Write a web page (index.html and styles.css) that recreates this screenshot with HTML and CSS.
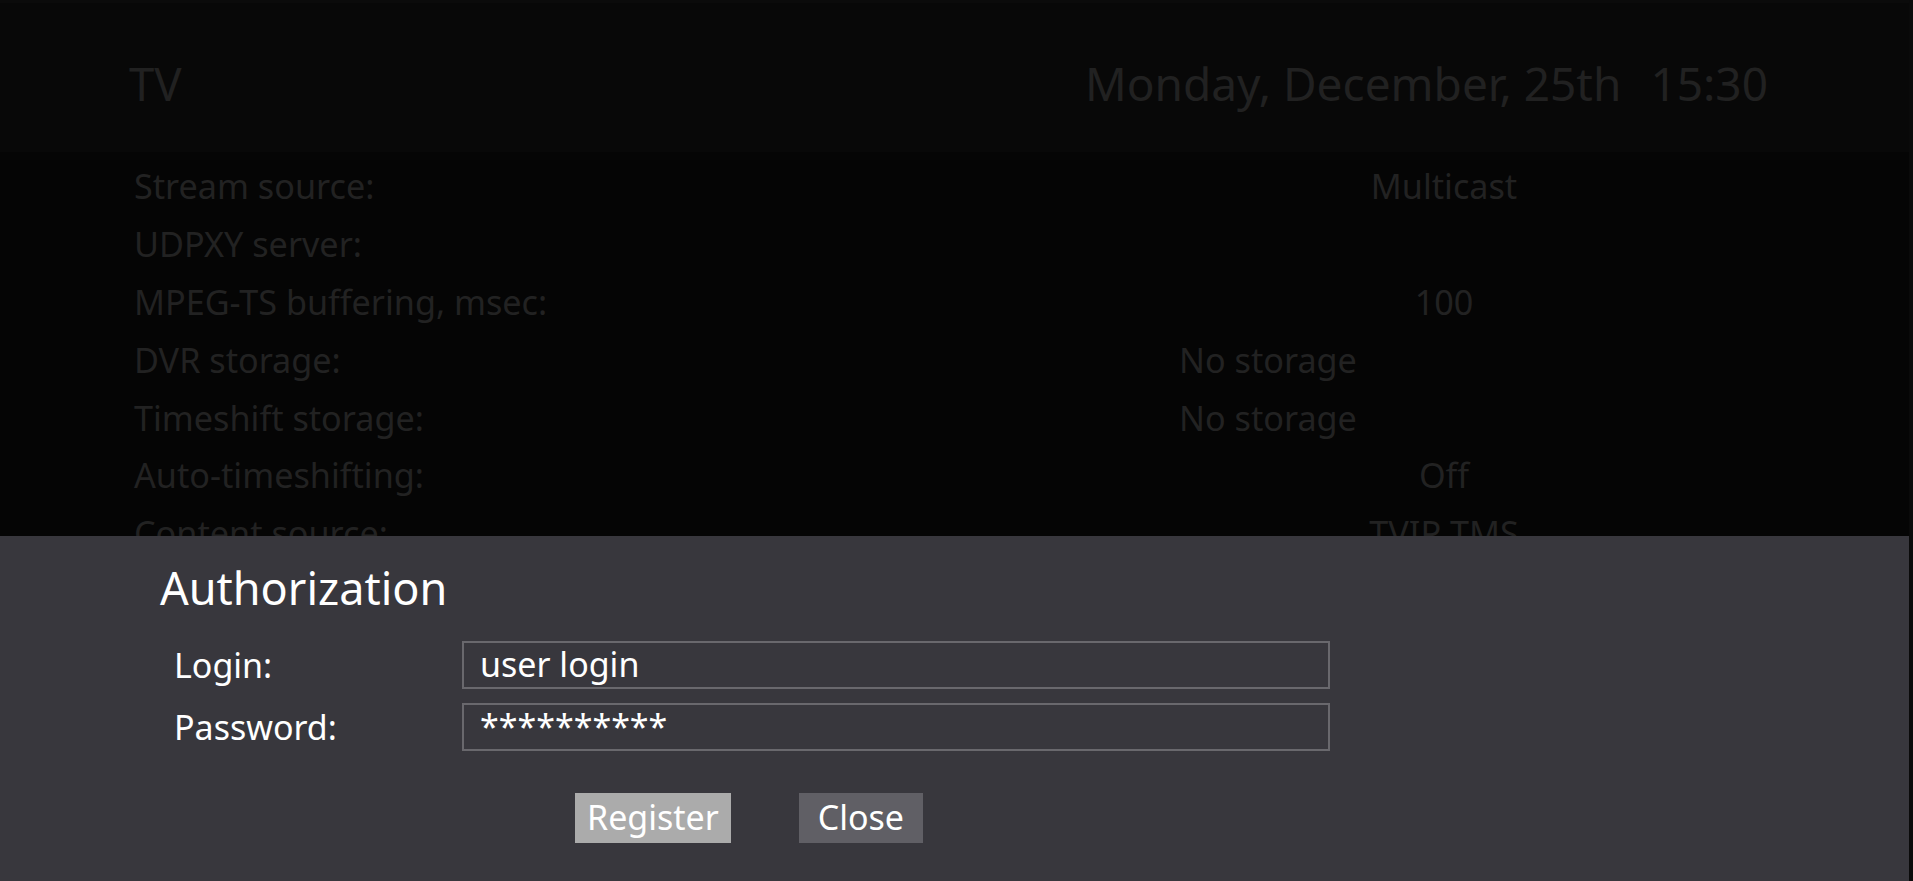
FILE: index.html
```html
<!DOCTYPE html>
<html>
<head>
<meta charset="utf-8">
<link rel="stylesheet" href="styles.css">
</head>
<body>
<div class="screen">
  <div class="topstrip"></div>
  <header class="header">
    <div class="title">TV</div>
    <div class="clock"><span class="date">Monday, December, 25th</span><span class="time">15:30</span></div>
  </header>
  <div class="settings">
    <div class="row"><div class="label">Stream source:</div><div class="value">Multicast</div></div>
    <div class="row"><div class="label">UDPXY server:</div><div class="value"></div></div>
    <div class="row"><div class="label">MPEG-TS buffering, msec:</div><div class="value">100</div></div>
    <div class="row"><div class="label">DVR storage:</div><div class="value left">No storage</div></div>
    <div class="row"><div class="label">Timeshift storage:</div><div class="value left">No storage</div></div>
    <div class="row"><div class="label">Auto-timeshifting:</div><div class="value">Off</div></div>
    <div class="row"><div class="label">Content source:</div><div class="value">TVIP TMS</div></div>
  </div>
  <div class="dialog">
    <div class="dlg-title">Authorization</div>
    <div class="field"><div class="flabel">Login:</div><div class="input">user login</div></div>
    <div class="field"><div class="flabel">Password:</div><div class="input">**********</div></div>
    <div class="buttons">
      <div class="btn primary">Register</div>
      <div class="btn">Close</div>
    </div>
  </div>
</div>
</body>
</html>
```

FILE: styles.css
```css
html, body {
  margin: 0;
  padding: 0;
  background: #0a0a0a;
  overflow: hidden;
}
body {
  font-family: "Noto Sans", "Open Sans", sans-serif;
  width: 1913px;
  height: 881px;
}
.screen {
  position: relative;
  width: 1909px;
  height: 881px;
  background: #050505;
  overflow: hidden;
}
.topstrip {
  height: 3px;
  background: #0b0b0b;
}
.header {
  height: 149px;
  background: #080808;
  display: flex;
  align-items: flex-start;
  justify-content: space-between;
  padding: 0 141px 0 129px;
  color: #212121;
  font-size: 46px;
  line-height: 60px;
}
.title {
  padding-top: 50px;
  font-size: 45.5px;
}
.clock {
  padding-top: 50px;
  display: flex;
  gap: 29px;
}
.settings {
  padding: 5px 0 0 134px;
  color: #222222;
  font-size: 34.2px;
}
.row {
  display: flex;
  height: 57.8px;
  align-items: center;
}
.label {
  width: 1045px;
}
.value {
  width: 530px;
  text-align: center;
}
.value.left {
  text-align: left;
}
.dialog {
  position: absolute;
  left: 0;
  right: 0;
  top: 536px;
  bottom: 0;
  background: #38373d;
  color: #ffffff;
  padding: 0 0 0 160px;
}
.dlg-title {
  font-size: 45px;
  line-height: 60px;
  padding-top: 22px;
  margin-bottom: 23px;
}
.field {
  display: flex;
  align-items: center;
  margin-bottom: 14px;
  padding-left: 14px;
}
.flabel {
  width: 288px;
  font-size: 34px;
}
.input {
  box-sizing: border-box;
  width: 868px;
  height: 48px;
  border: 2px solid #69686d;
  padding-left: 16px;
  font-size: 34px;
  line-height: 42px;
}
.buttons {
  display: flex;
  gap: 68px;
  padding-left: 415px;
  margin-top: 42px;
}
.btn {
  min-width: 124px;
  height: 50px;
  box-sizing: border-box;
  padding: 0 12px;
  background: #605f65;
  font-size: 34px;
  line-height: 48px;
  text-align: center;
}
.btn.primary {
  background: #ababab;
}
```
